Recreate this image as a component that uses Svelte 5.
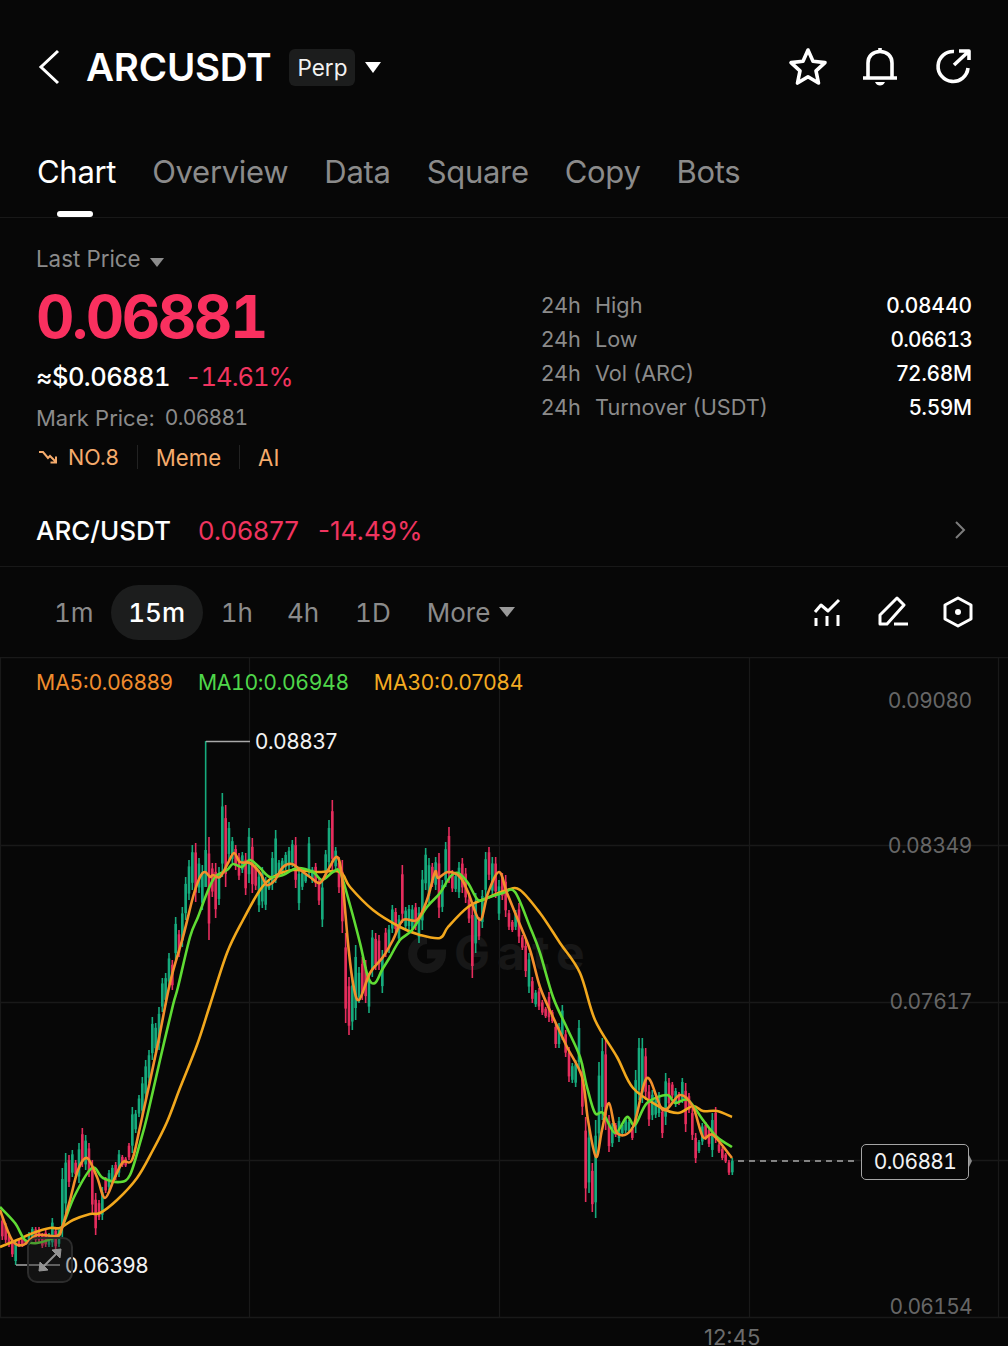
<script>
    // hi lo colour for every candle, in page pixels, step 3.33px from x=2.33
    const raw = `1217 1240 r,1223 1243 r,1233 1247 r,1240 1257 r,1240 1265 g,1238 1247 r,1237 1247 r,1240 1245 r,1232 1245 g,1227 1240 g,
1227 1242 r,1227 1243 r,1233 1248 r,1230 1247 r,1233 1247 g,1218 1247 g,1227 1250 r,1227 1247 g,1168 1237 g,1153 1213 g,
1155 1187 r,1150 1177 g,1160 1177 r,1143 1183 g,1128 1167 r,1135 1170 g,1143 1177 r,1160 1213 r,1193 1235 r,1200 1220 r,
1187 1220 g,1177 1193 r,1170 1190 g,1165 1183 g,1162 1180 r,1150 1177 g,1155 1167 r,1157 1167 r,1143 1160 r,1107 1153 g,
1110 1133 g,1095 1117 g,1077 1117 g,1060 1100 g,1050 1083 g,1017 1060 g,1023 1053 g,1007 1050 g,978 1012 g,973 1005 g,
953 987 g,960 990 r,917 960 g,930 957 r,907 947 g,877 920 g,860 900 g,845 890 g,843 902 r,858 893 g,
865 910 g,741 887 g,837 940 r,863 897 r,863 918 r,867 905 g,793 877 g,805 887 r,822 860 g,837 863 g,
845 870 r,853 880 r,852 873 g,853 895 r,828 883 g,838 893 r,863 890 r,870 912 g,867 908 g,877 910 g,
880 890 g,852 890 g,830 883 g,860 877 g,858 875 g,852 870 g,847 870 g,840 867 g,837 888 r,867 910 g,
870 890 g,873 883 g,837 877 g,867 883 g,863 887 r,877 905 r,880 927 g,850 877 g,820 870 g,800 870 r,
847 870 g,857 893 r,860 933 r,933 1023 r,977 1035 r,977 1030 g,945 1020 g,967 1003 g,957 1000 r,960 1003 r,
973 1013 g,930 977 g,933 970 r,935 970 r,950 993 g,928 957 r,925 953 g,905 933 g,908 933 r,915 943 g,
865 923 r,907 930 g,905 930 g,905 933 g,903 930 r,907 943 g,870 930 g,848 890 g,858 903 g,863 887 r,
857 890 g,853 918 r,880 912 g,842 887 g,827 883 r,870 892 r,873 892 g,862 898 g,858 893 r,868 903 r,
895 923 r,903 978 r,893 953 g,917 940 r,890 928 g,852 897 g,847 880 r,857 897 g,857 898 r,880 920 g,
873 900 r,875 917 r,910 930 r,920 932 r,910 930 g,903 943 r,935 950 r,940 977 r,953 993 g,977 1003 r,
990 1007 g,988 1010 r,1000 1015 r,1007 1018 r,992 1022 r,1010 1023 r,1023 1048 r,1023 1048 g,1005 1040 g,1030 1057 r,
1047 1082 r,1063 1083 g,1060 1087 g,1020 1070 g,1063 1115 r,1117 1202 r,1127 1193 g,1163 1212 r,1120 1218 g,1062 1147 g,
1038 1120 g,1040 1130 r,1115 1152 r,1123 1147 g,1123 1137 r,1117 1142 g,1123 1135 g,1117 1133 g,1120 1133 g,1127 1140 r,
1070 1133 g,1038 1100 g,1038 1103 g,1048 1100 r,1085 1126 r,1090 1120 g,1097 1118 g,1092 1117 g,1107 1138 r,1073 1125 g,
1078 1108 r,1082 1098 r,1088 1107 g,1092 1105 r,1078 1103 g,1083 1132 r,1093 1113 r,1108 1140 r,1133 1163 r,1140 1153 g,
1123 1145 g,1122 1140 r,1127 1147 r,1113 1157 g,1107 1143 r,1143 1153 r,1147 1160 r,1153 1163 r,1160 1175 r,1158 1175 g`;

    const candles = raw.split(",").map((s, i) => {
        const [hi, lo, c] = s.trim().split(" ");
        const h = +hi, l = +lo;
        // the spike at i=61 is nearly all wick
        const top = i === 61 ? 850 : h + (l - h) * 0.16;
        const bot = i === 61 ? 887 : l - (l - h) * 0.16;
        return { x: 2.33 + i * 3.3333, h, l, top, bot, up: c === "g" };
    });

    const ma5 = [[0,1210],[12,1240],[23,1245],[37,1235],[57,1236],[62,1228],[70,1200],[78,1170],[87,1158],[97,1177],[105,1198],[115,1177],[123,1162],[132,1160],[140,1127],[157,1048],[170,983],[183,937],[193,897],[200,877],[205,872],[210,877],[213,875],[220,877],[228,863],[234,853],[240,862],[250,863],[260,873],[267,885],[275,880],[283,867],[292,864],[303,872],[310,877],[320,883],[328,870],[337,857],[342,877],[348,943],[353,983],[359,1000],[370,973],[383,957],[393,940],[403,920],[417,920],[427,900],[435,872],[438,878],[448,872],[460,877],[468,892],[480,920],[488,893],[499,872],[507,893],[518,920],[530,950],[540,987],[553,1017],[567,1047],[582,1077],[588,1120],[596,1157],[602,1130],[609,1103],[617,1133],[633,1127],[647,1078],[663,1110],[680,1095],[693,1107],[703,1137],[713,1135],[732,1158]];
    const ma10 = [[0,1207],[15,1223],[25,1240],[37,1243],[57,1236],[63,1225],[75,1195],[92,1168],[103,1178],[120,1182],[130,1175],[140,1143],[147,1117],[160,1060],[173,1005],[178,987],[190,937],[198,917],[207,893],[215,877],[227,870],[233,864],[242,867],[250,860],[260,868],[270,877],[283,875],[297,868],[313,872],[322,880],[333,872],[340,872],[350,905],[360,943],[368,977],[375,983],[382,970],[390,957],[400,940],[412,930],[427,907],[440,893],[450,877],[458,873],[468,883],[478,900],[487,898],[503,893],[515,892],[530,927],[540,953],[553,997],[567,1028],[580,1057],[587,1087],[595,1113],[603,1113],[615,1133],[627,1117],[635,1125],[647,1103],[667,1095],[675,1103],[688,1100],[703,1120],[717,1137],[732,1147]];
    const ma30 = [[0,1247],[17,1240],[33,1233],[50,1228],[60,1228],[73,1220],[90,1214],[100,1213],[117,1200],[137,1178],[153,1150],[167,1122],[180,1088],[197,1045],[210,1005],[227,953],[243,920],[260,890],[273,877],[293,870],[317,872],[340,872],[350,887],[373,910],[400,927],[420,935],[440,938],[448,927],[468,907],[487,898],[507,890],[520,890],[540,913],[560,943],[580,973],[595,1020],[617,1057],[633,1088],[660,1107],[678,1113],[693,1106],[703,1111],[717,1111],[732,1117]];

    // catmull-rom through the traced points
    function smooth(p) {
        let d = `M${p[0][0]} ${p[0][1]}`;
        for (let i = 0; i < p.length - 1; i++) {
            const a = p[i - 1] || p[i], b = p[i], c = p[i + 1], e = p[i + 2] || c;
            const c1x = b[0] + (c[0] - a[0]) / 6, c1y = b[1] + (c[1] - a[1]) / 6;
            const c2x = c[0] - (e[0] - b[0]) / 6, c2y = c[1] - (e[1] - b[1]) / 6;
            d += `C${c1x.toFixed(1)} ${c1y.toFixed(1)} ${c2x.toFixed(1)} ${c2y.toFixed(1)} ${c[0]} ${c[1]}`;
        }
        return d;
    }

    // the app's digit 1 is wider than Inter's default one
    const hasOne = (s) => s.includes("1");

    const tabs = ["Overview", "Data", "Square", "Copy", "Bots"];
    const stats = [
        ["High", "0.08440"],
        ["Low", "0.06613"],
        ["Vol (ARC)", "72.68M"],
        ["Turnover (USDT)", "5.59M"]
    ];
    const axis = [
        ["0.09080", 700],
        ["0.08349", 845],
        ["0.07617", 1001],
        ["0.06154", 1306]
    ];
</script>

<div class="page">
    <header class="head">
        <svg class="back" width="24" height="36" viewBox="0 0 24 36"><path d="M20 2 L3 18 L20 34" /></svg>
        <h1>ARCUSDT</h1>
        <span class="tag">Perp</span>
        <span class="caret white"></span>
        <div class="actions">
            <svg width="40" height="40" viewBox="0 0 40 40"><path class="ic" d="M20 3 L25 14.2 L37 15.6 L28 23.8 L30.5 36 L20 29.8 L9.5 36 L12 23.8 L3 15.6 L15 14.2 Z" /></svg>
            <svg width="36" height="40" viewBox="0 0 36 40"><path class="ic" d="M1 31 H35 M6 31 V16 C6 9 11 4.500 18 4.500 C25 4.500 30 9 30 16 V31 M18 1 V4" /><path class="fill" d="M13 35 H23 C22 37.500 20 38.500 18 38.500 C16 38.500 14 37.500 13 35 Z" /></svg>
            <svg class="last-icon" width="36" height="40" viewBox="0 0 36 40"><path class="ic" d="M19 4.500 A15 15 0 1 0 33 21 M19 18 L33 5 M24 4 H34 V13" /></svg>
        </div>
    </header>

    <nav class="tabs">
        <span class="tab active">Chart</span>
        {#each tabs as t}
            <span class="tab">{t}</span>
        {/each}
    </nav>

    <section class="summary">
        <div class="left">
            <div class="last">Last Price <span class="caret grey"></span></div>
            <div class="price">0.06881</div>
            <div class="usd"><span class="usd-val">≈$0.06881</span><span class="red">-14.61%</span></div>
            <div class="mark"><span>Mark Price:</span><span class="one mark-val">0.06881</span></div>
            <div class="labels">
                <svg width="20" height="14" viewBox="0 0 20 14"><path d="M1 2 H5 L10 8 L12 6 L18 12 M18 6.500 V12.500 H12.500" /></svg>
                <span class="no">NO.8</span>
                <i></i>
                <span>Meme</span>
                <i></i>
                <span>AI</span>
            </div>
        </div>
        <div class="stats">
            {#each stats as [name, value]}
                <span class="h">24h</span><span class="n">{name}</span><span class="v" class:one={hasOne(value)}>{value}</span>
            {/each}
        </div>
    </section>

    <div class="spot">
        <span class="pair">ARC/USDT</span>
        <span class="red">0.06877</span>
        <span class="red">-14.49%</span>
        <svg width="12" height="20" viewBox="0 0 12 20"><path d="M2 2 L10 10 L2 18" /></svg>
    </div>

    <div class="bar">
        <span class="iv first">1m</span>
        <span class="iv pill">15m</span>
        <span class="iv tight">1h</span>
        <span class="iv">4h</span>
        <span class="iv">1D</span>
        <span class="iv more">More <span class="caret grey2"></span></span>
        <div class="tools">
            <svg width="30" height="32" viewBox="0 0 30 32"><path class="ic3" d="M2 16 L8 9 L15 15 L26 4 M3 22 V30 M14 20 V30 M25 19 V30" /></svg>
            <svg width="32" height="32" viewBox="0 0 32 32"><path class="ic3" d="M3 28 V19 L20 2 L27 9 L10 28 Z M17 28 H31" /></svg>
            <svg width="30" height="32" viewBox="0 0 30 32"><path class="ic3" d="M15 2 L28 9 V23 L15 30 L2 23 V9 Z" /><circle cx="15" cy="16" r="3" fill="#fff" /></svg>
        </div>
    </div>

    <div class="chart">
        <svg class="plot" width="1008" height="689" viewBox="0 657 1008 689">
            <g stroke="#191919" stroke-width="1.300" fill="none">
                <path d="M0 657.500 H1008 M0 845.500 H1008 M0 1002.500 H1008 M0 1160.500 H1008 M0 1317.500 H1008" />
                <path d="M0.500 657 V1317 M249.500 657 V1317 M499.500 657 V1317 M749.500 657 V1317 M998.500 657 V1317" />
            </g>
            <path d="M427 939.500 A14.500 14.500 0 1 0 441.500 954 H427" fill="none" stroke="#171717" stroke-width="9" />
            <text x="454" y="970" class="wm">Gate</text>
            {#each candles as c}
                <rect x={c.x - 0.8} y={c.h} width="1.600" height={c.l - c.h} fill={c.up ? "#16ab7d" : "#e52d5d"} />
                <rect x={c.x - 1.3} y={c.top} width="2.600" height={c.bot - c.top} fill={c.up ? "#16ab7d" : "#e52d5d"} />
            {/each}
            <path class="line" d={smooth(ma30)} stroke="#f2a81d" />
            <path class="line" d={smooth(ma10)} stroke="#5fdc34" />
            <path class="line" d={smooth(ma5)} stroke="#f3902c" />
            <path d="M206 741.500 H250 M16 1265 H60" stroke="#a8a8a8" stroke-width="1.500" fill="none" />
            <path d="M738 1161 H858" stroke="#a9a9a9" stroke-width="1.500" stroke-dasharray="6 5" fill="none" />
            <path d="M969 1155 L972 1161 L969 1167 Z" fill="#8c8c8c" />
        </svg>

        <div class="legend">
            <span class="c5">MA5:0.06889</span>
            <span class="c10">MA10:0.06948</span>
            <span class="c30">MA30:0.07084</span>
        </div>

        {#each axis as [label, y]}
            <span class="tick" class:one={hasOne(label)} style="top: {y - 657 - 13}px">{label}</span>
        {/each}

        <span class="extreme high">0.08837</span>
        <span class="extreme low">0.06398</span>

        <div class="expand">
            <svg width="46" height="46" viewBox="0 0 46 46">
                <path d="M25 13 L34 12 L33 21 Z M21 33 L12 34 L13 25 Z" fill="#949494" stroke="#949494" stroke-width="1" />
                <path d="M29 17 L17 29" stroke="#949494" stroke-width="2" />
            </svg>
        </div>

        <div class="now one">0.06881</div>
        <span class="time">12:45</span>
    </div>
</div>

<style>
    :global(body) {
        margin: 0;
        background: #070707;
    }

    .page {
        width: 1008px;
        height: 1346px;
        overflow: hidden;
        background: #070707;
        color: #fff;
        font-family: Inter, "Noto Sans", sans-serif;
    }

    svg {
        display: block;
        fill: none;
        flex: none;
    }

    .one {
        font-variant-numeric: tabular-nums;
        letter-spacing: -0.7px;
    }

    .head {
        display: flex;
        align-items: center;
        height: 134px;
        padding: 0 37px 0 38px;
        box-sizing: border-box;
    }

    .back path {
        stroke: #fff;
        stroke-width: 3;
        fill: none;
    }

    h1 {
        margin: 0 0 0 24px;
        font-size: 38.500px;
        font-weight: 600;
        letter-spacing: -0.2px;
    }

    .tag {
        margin-left: 18px;
        padding: 0 8px;
        height: 37px;
        line-height: 37px;
        background: #1c1d1d;
        border-radius: 6px;
        font-size: 22.500px;
        color: #f2f2f2;
    }

    .caret {
        display: inline-block;
        width: 0;
        height: 0;
        border-left: 8px solid transparent;
        border-right: 8px solid transparent;
        border-top: 11px solid #fff;
    }

    .caret.white {
        margin-left: 10px;
    }

    .caret.grey {
        margin-left: 3px;
        border-left-width: 7px;
        border-right-width: 7px;
        border-top: 9px solid #8c8c8c;
        vertical-align: 0;
    }

    .caret.grey2 {
        margin-left: 2px;
        border-left-width: 8px;
        border-right-width: 8px;
        border-top: 10px solid #9a9a9a;
        vertical-align: 5px;
    }

    .actions {
        margin-left: auto;
        display: flex;
        align-items: center;
        gap: 34px;
    }

    .last-icon {
        margin-left: 3px;
    }

    .ic {
        stroke: #fff;
        stroke-width: 3.600;
        stroke-linejoin: round;
        fill: none;
    }

    .fill {
        fill: #fff;
    }

    .ic3 {
        stroke: #fff;
        stroke-width: 3;
        stroke-linejoin: round;
        fill: none;
    }

    .tabs {
        display: flex;
        gap: 36px;
        height: 83px;
        padding: 0 0 0 37px;
        font-size: 31px;
        line-height: 76px;
        color: #8b8b8b;
        border-bottom: 1px solid #181818;
        letter-spacing: -0.3px;
    }

    .tab {
        position: relative;
    }

    .tab.active {
        color: #fff;
    }

    .tab.active::after {
        content: "";
        position: absolute;
        left: 20px;
        width: 36px;
        height: 6px;
        bottom: 0;
        background: #fff;
        border-radius: 3px;
    }

    .summary {
        display: flex;
        height: 276px;
        box-sizing: border-box;
        padding: 23px 36px 0;
    }

    .left {
        width: 505px;
    }

    .last {
        font-size: 22.300px;
        line-height: 36px;
        color: #8b8b8b;
    }

    .price {
        margin-top: 3px;
        font-size: 59.500px;
        line-height: 72px;
        font-weight: 700;
        color: #f9305f;
        font-variant-numeric: tabular-nums;
        letter-spacing: -2.400px;
    }

    .usd {
        display: flex;
        gap: 15px;
        margin-top: 7px;
        font-size: 25.500px;
        line-height: 36px;
        font-weight: 500;
        font-variant-numeric: tabular-nums;
    }

    .usd-val {
        letter-spacing: -0.55px;
    }

    .usd .red {
        font-weight: 400;
        letter-spacing: -1px;
    }

    .red {
        color: #f0345f;
    }

    .mark {
        display: flex;
        gap: 10px;
        margin-top: 5px;
        font-size: 22px;
        line-height: 36px;
        color: #8b8b8b;
    }

    .mark-val {
        font-size: 21px;
    }

    .labels {
        display: flex;
        align-items: center;
        margin-top: 3px;
        height: 36px;
        font-size: 22.200px;
        color: #f5ab6c;
    }

    .labels svg {
        margin-left: 2px;
    }

    .labels svg path {
        stroke: #f5ab6c;
        stroke-width: 2;
        fill: none;
    }

    .labels .no {
        margin-left: 10px;
        font-size: 21.500px;
    }

    .labels i {
        width: 1px;
        height: 24px;
        margin: 0 18px;
        background: #222;
    }

    .stats {
        display: grid;
        grid-template-columns: 54px 1fr auto;
        grid-auto-rows: 34px;
        align-items: center;
        align-content: start;
        flex: 1;
        margin-top: 47px;
        font-size: 21.700px;
        color: #8b8b8b;
    }

    .stats .v {
        color: #fff;
        text-align: right;
        font-size: 20.800px;
        font-weight: 500;
    }

    .spot {
        display: flex;
        align-items: center;
        height: 73px;
        box-sizing: border-box;
        padding: 0 42px 0 36px;
        font-size: 26px;
        border-bottom: 1px solid #181818;
    }

    .spot .pair {
        font-weight: 500;
        margin-right: 27px;
    }

    .spot .red + .red {
        margin-left: 19px;
    }

    .spot svg {
        margin-left: auto;
    }

    .spot svg path {
        stroke: #7c7c7c;
        stroke-width: 2;
        fill: none;
    }

    .bar {
        display: flex;
        align-items: center;
        height: 90px;
        padding: 0 35px 0 54px;
        box-sizing: border-box;
        font-size: 26px;
        color: #8b8b8b;
        font-variant-numeric: tabular-nums;
    }

    .iv {
        margin-right: 36px;
    }

    .iv.first {
        margin-right: 17px;
    }

    .iv.tight {
        margin-right: 34px;
    }

    .iv.pill {
        width: 92px;
        height: 55px;
        line-height: 55px;
        text-align: center;
        margin-right: 18px;
        background: #1c1d1d;
        border-radius: 28px;
        color: #fff;
        font-weight: 500;
    }

    .tools {
        margin-left: auto;
        display: flex;
        align-items: center;
        gap: 34px;
    }

    .chart {
        position: relative;
        height: 689px;
    }

    .plot {
        position: absolute;
        left: 0;
        top: 0;
    }

    .line {
        fill: none;
        stroke-width: 2.600;
        stroke-linejoin: round;
    }

    .wm {
        font-family: Inter, sans-serif;
        font-size: 48px;
        font-weight: 700;
        letter-spacing: 7px;
        fill: #171717;
    }

    .legend {
        position: absolute;
        left: 36px;
        top: 11px;
        display: flex;
        gap: 25px;
        font-size: 21.200px;
        line-height: 28px;
    }

    .c5 {
        color: #f08c2e;
    }

    .c10 {
        color: #4fd64a;
        font-variant-numeric: tabular-nums;
        letter-spacing: -0.35px;
    }

    .c30 {
        color: #f4ab22;
    }

    .tick {
        position: absolute;
        right: 36px;
        font-size: 21px;
        line-height: 28px;
        color: #666;
    }

    .extreme {
        position: absolute;
        font-size: 21px;
        line-height: 28px;
        color: #f2f2f2;
    }

    .high {
        left: 255px;
        top: 71px;
    }

    .low {
        left: 65px;
        top: 595px;
    }

    .expand {
        position: absolute;
        left: 27px;
        top: 580px;
        width: 46px;
        height: 46px;
        box-sizing: border-box;
        border: 2px solid #2c2c2c;
        border-radius: 10px;
        background: rgba(40, 40, 40, 0.35);
    }

    .expand svg {
        margin: -2px;
    }

    .now {
        position: absolute;
        left: 861px;
        top: 487px;
        width: 108px;
        height: 36px;
        box-sizing: border-box;
        border: 1.500px solid #a5a5a5;
        border-radius: 5px;
        background: #070707;
        font-size: 21px;
        line-height: 33px;
        text-align: center;
        color: #f2f2f2;
    }

    .time {
        position: absolute;
        left: 704px;
        top: 666px;
        font-size: 22px;
        line-height: 28px;
        color: #6c6c6c;
    }
</style>
